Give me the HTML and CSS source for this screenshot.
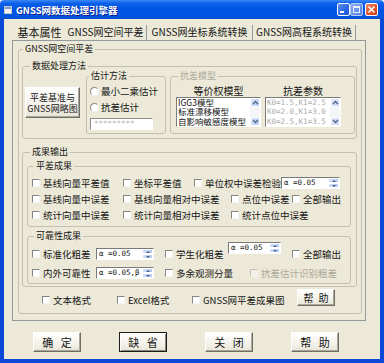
FILE: index.html
```html
<!DOCTYPE html>
<html lang="zh-CN">
<head>
<meta charset="utf-8">
<title>GNSS网数据处理引擎器</title>
<link rel="stylesheet" href="styles.css">
</head>
<body>
<div class="window">
  <div class="titlebar">
    <svg class="app-icon" width="8" height="8" viewBox="0 0 8 8">
      <rect x="0.5" y="0.5" width="7" height="7" fill="#f2f2f2" stroke="#c8c8c8"/>
      <rect x="1" y="1" width="6" height="2" fill="#7d9fd6"/>
    </svg>
    <span class="title">GNSS网数据处理引擎器</span>
    <div class="caption-btns">
      <span class="cap cap-min"><svg width="11" height="11" viewBox="0 0 11 11"><rect x="2" y="7" width="4" height="2" fill="#fff"/></svg></span>
      <span class="cap cap-max"><svg width="11" height="11" viewBox="0 0 11 11"><rect x="2.5" y="2.5" width="6" height="6" fill="none" stroke="#e8eefc"/><rect x="2.5" y="2.5" width="6" height="1.5" fill="#e8eefc"/></svg></span>
      <span class="cap cap-close"><svg width="11" height="11" viewBox="0 0 11 11"><path d="M2.5 2.5 L8.5 8.5 M8.5 2.5 L2.5 8.5" stroke="#fff" stroke-width="1.6"/></svg></span>
    </div>
  </div>

  <div class="client">
    <div class="tabs">
      <span class="tab tab-first">基本属性</span>
      <span class="tab tab-2">GNSS网空间平差</span>
      <span class="tab tab-3">GNSS网坐标系统转换</span>
      <span class="tab tab-4">GNSS网高程系统转换</span>
    </div>

    <div class="panel">
      <fieldset class="grp grp-main">
        <legend>GNSS网空间平差</legend>

        <fieldset class="grp grp-method">
          <legend>数据处理方法</legend>
          <div class="method-row">
            <button class="btn-raised datum" type="button">平差基准与<br>GNSS网略图</button>

            <fieldset class="grp grp-est">
              <legend>估计方法</legend>
              <label class="radio-row"><span class="radio"></span>最小二乘估计</label>
              <label class="radio-row"><span class="radio"></span>抗差估计</label>
              <div class="textbox">*********</div>
            </fieldset>

            <fieldset class="grp grp-robust">
              <legend>抗差模型</legend>
              <div class="robust-cols">
                <div class="rcol rcol-1">
                  <div class="rlabel">等价权模型</div>
                  <div class="listbox">
                    <div class="items">
                      <div>IGG3模型</div>
                      <div>标准漂移模型</div>
                      <div>自影响敏感度模型</div>
                    </div>
                    <div class="vscroll">
                      <span class="sb"><svg width="7" height="5" viewBox="0 0 7 5"><path d="M1 4 L3.5 1.5 L6 4" fill="none" stroke="#4d6185" stroke-width="1.3"/></svg></span>
                      <span class="track"></span>
                      <span class="sb"><svg width="7" height="5" viewBox="0 0 7 5"><path d="M1 1 L3.5 3.5 L6 1" fill="none" stroke="#4d6185" stroke-width="1.3"/></svg></span>
                    </div>
                  </div>
                </div>
                <div class="rcol rcol-2">
                  <div class="rlabel">抗差参数</div>
                  <div class="listbox listbox-off">
                    <div class="items mono">
                      <div>K0=1.5,K1=2.5</div>
                      <div>K0=2.0,K1=3.0</div>
                      <div>K0=2.5,K1=3.5</div>
                    </div>
                    <div class="vscroll">
                      <span class="sb"><svg width="7" height="5" viewBox="0 0 7 5"><path d="M1 4 L3.5 1.5 L6 4" fill="none" stroke="#4d6185" stroke-width="1.3"/></svg></span>
                      <span class="track"></span>
                      <span class="sb"><svg width="7" height="5" viewBox="0 0 7 5"><path d="M1 1 L3.5 3.5 L6 1" fill="none" stroke="#4d6185" stroke-width="1.3"/></svg></span>
                    </div>
                  </div>
                </div>
              </div>
            </fieldset>
          </div>
        </fieldset>

        <fieldset class="grp grp-out">
          <legend>成果输出</legend>

          <fieldset class="grp grp-adj">
            <legend>平差成果</legend>
            <div class="row">
              <label class="chk w91"><span class="box"></span>基线向量平差值</label>
              <label class="chk w71"><span class="box"></span>坐标平差值</label>
              <label class="chk w87"><span class="box"></span>单位权中误差检验</label>
              <span class="spin w59"><span class="spin-text">α =0.05</span><span class="spin-btns"><span class="sp sp-up"></span><span class="sp sp-down"></span></span></span>
            </div>
            <div class="row">
              <label class="chk w91"><span class="box"></span>基线向量中误差</label>
              <label class="chk w108"><span class="box"></span>基线向量相对中误差</label>
              <label class="chk w61"><span class="box"></span>点位中误差</label>
              <label class="chk"><span class="box"></span>全部输出</label>
            </div>
            <div class="row">
              <label class="chk w91"><span class="box"></span>统计向量中误差</label>
              <label class="chk w108"><span class="box"></span>统计向量相对中误差</label>
              <label class="chk"><span class="box"></span>统计点位中误差</label>
            </div>
          </fieldset>

          <fieldset class="grp grp-rel">
            <legend>可靠性成果</legend>
            <div class="row row-rel1">
              <label class="chk w64"><span class="box"></span>标准化粗差</label>
              <span class="spin w58"><span class="spin-text">α =0.05</span><span class="spin-btns"><span class="sp sp-up"></span><span class="sp sp-down"></span></span></span>
              <label class="chk w63 ml11"><span class="box"></span>学生化粗差</label>
              <span class="spin w53 spin-raised"><span class="spin-text">α =0.05</span><span class="spin-btns"><span class="sp sp-up"></span><span class="sp sp-down"></span></span></span>
              <label class="chk ml11"><span class="box"></span>全部输出</label>
            </div>
            <div class="row row-rel2">
              <label class="chk w64"><span class="box"></span>内外可靠性</label>
              <span class="spin w58"><span class="spin-text">α =0.05,β</span><span class="spin-btns"><span class="sp sp-up"></span><span class="sp sp-down"></span></span></span>
              <label class="chk w85 ml11"><span class="box"></span>多余观测分量</label>
              <label class="chk chk-off"><span class="box"></span>抗差估计识别粗差</label>
            </div>
          </fieldset>
        </fieldset>

        <div class="out-row">
          <label class="chk w75"><span class="box"></span>文本格式</label>
          <label class="chk w75"><span class="box"></span>Excel格式</label>
          <label class="chk w105"><span class="box"></span>GNSS网平差成果图</label>
          <button class="btn help-small" type="button">帮 助</button>
        </div>
      </fieldset>
    </div>

    <div class="actions">
      <button class="btn act" type="button">确 定</button>
      <button class="btn act btn-default" type="button">缺 省</button>
      <button class="btn act" type="button">关 闭</button>
      <button class="btn act" type="button">帮 助</button>
    </div>
  </div>
</div>
</body>
</html>
```

FILE: styles.css
```css
* { box-sizing: border-box; }

html, body {
  margin: 0;
  padding: 0;
}

body {
  width: 384px;
  height: 363px;
  overflow: hidden;
  background: #ffffff;
  font-family: "Noto Sans CJK SC", "Noto Sans", sans-serif;
  color: #161616;
}

.window {
  width: 384px;
  height: 363px;
  display: flex;
  flex-direction: column;
}

/* ---------- title bar ---------- */
.titlebar {
  height: 19px;
  flex: none;
  display: flex;
  align-items: center;
  padding: 0 6px 0 4px;
  border-radius: 4px 4px 0 0;
  background: linear-gradient(#3d8af5 0%, #0b5fe9 18%, #0054e3 50%, #0256e6 80%, #0c4ed0 100%);
}

.app-icon {
  flex: none;
  margin-top: 1px;
}

.title {
  margin-left: 4px;
  font-size: 9.5px;
  line-height: 12px;
  font-weight: bold;
  color: #ffffff;
  text-shadow: 1px 1px 0 #0a1f8a;
  white-space: nowrap;
}

.caption-btns {
  margin-left: auto;
  display: flex;
  align-items: center;
}

.cap {
  width: 13px;
  height: 13px;
  border: 1px solid #ffffff;
  border-radius: 2px;
  display: flex;
  align-items: center;
  justify-content: center;
}

.cap-min {
  background: linear-gradient(135deg, #5d93f7, #2a66e8 60%, #1f56d6);
}

.cap-max {
  border-color: #b6c9f4;
  background: linear-gradient(135deg, #8ab0f6, #6590ea 60%, #5a84e0);
}

.cap-close {
  margin-left: 2px;
  background: linear-gradient(135deg, #f08a68, #e0502a 60%, #c8401e);
}

/* ---------- client area ---------- */
.client {
  flex: 1;
  background: #ece9d8;
  border-style: solid;
  border-color: #0a48d8;
  border-width: 0 4px 4px 4px;
  padding: 2px 14px 0 8px;
  display: flex;
  flex-direction: column;
}

.tabs {
  height: 19px;
  margin-left: 2px;
  display: flex;
  align-items: flex-end;
}

.tab {
  height: 15px;
  line-height: 14px;
  font-size: 10px;
  text-align: center;
  white-space: nowrap;
  border-right: 1px solid #919b9c;
  flex: none;
}

.tab-first {
  width: 51px;
  font-size: 11px;
  border-right: none;
}

.tab-2 { width: 82px; }
.tab-3 { width: 106px; }
.tab-4 { width: 103px; }

.panel {
  width: 354px;
  flex: none;
  border: 1px solid #919b9c;
  padding: 3px 0 6px 5px;
}

/* ---------- group boxes ---------- */
.grp {
  margin: 0;
  min-inline-size: 0;
  border: 1px solid #c3c0b1;
  border-radius: 3px;
}

.grp legend {
  font-size: 9px;
  line-height: 10px;
  padding: 0 2px;
  color: #161616;
  white-space: nowrap;
}

.grp-main {
  width: 344px;
  padding: 7px 4px 7px 3px;
}
.grp-main > legend { margin-left: 1px; }

.grp-method {
  width: 335px;
  padding: 0 2px 4px 2px;
}
.grp-method > legend { margin-left: 5px; }

.method-row {
  display: flex;
  align-items: flex-start;
}

.grp-est {
  width: 80px;
  margin-left: 6px;
  padding: 2px 3px 3px 3px;
  flex: none;
}
.grp-est > legend { margin-left: -1px; }

.grp-robust {
  width: 185px;
  margin-left: 4px;
  padding: 4px 5px 6px 5px;
  flex: none;
}
.grp-robust > legend {
  margin-left: 2px;
  color: #aca899;
}

.grp-out {
  width: 335px;
  margin-top: 8px;
  padding: 4px 4px 2px 4px;
}
.grp-out > legend { margin-left: 3px; }

.grp-adj {
  width: 324px;
  padding: 4px 0 3px 4px;
}
.grp-adj > legend { margin-left: 2px; }

.grp-rel {
  width: 324px;
  margin-top: 4px;
  padding: 3px 0 1px 4px;
}
.grp-rel > legend { margin-left: 2px; }

/* ---------- buttons ---------- */
.btn-raised,
.btn {
  font-family: "Noto Sans CJK SC", "Noto Sans", sans-serif;
  color: #161616;
  padding: 0;
  margin: 0;
  border: 1px solid;
  border-color: #ffffff #6f6d64 #6f6d64 #ffffff;
  box-shadow: inset -1px -1px 0 #aca899;
  background: linear-gradient(#fefefd, #f1efe6 70%, #e6e3d6);
  flex: none;
}

.datum {
  width: 55px;
  height: 31px;
  margin-top: 16px;
  font-size: 9px;
  line-height: 11px;
  white-space: nowrap;
}

.help-small {
  width: 38px;
  height: 17px;
  margin-left: 0;
  font-size: 10px;
  line-height: 14px;
  word-spacing: 3px;
}

.actions {
  display: flex;
  gap: 38px;
  margin-top: 11px;
  padding-left: 21px;
}

.act {
  width: 48px;
  height: 20px;
  font-size: 11px;
  line-height: 17px;
  word-spacing: 5px;
}

.btn-default {
  border: 1px solid #1b1b1b;
  box-shadow: inset 1px 1px 0 #ffffff, inset -1px -1px 0 #8a887c;
}

/* ---------- radios & text box ---------- */
.radio-row {
  display: flex;
  align-items: center;
  height: 16px;
  font-size: 9.5px;
  line-height: 12px;
  white-space: nowrap;
}

.radio {
  width: 9px;
  height: 9px;
  margin-right: 2px;
  border-radius: 50%;
  border: 1px solid;
  border-color: #8c8c8c #f4f4f4 #f4f4f4 #8c8c8c;
  background: #ffffff;
  flex: none;
}

.textbox {
  width: 63px;
  height: 12px;
  margin-top: 3px;
  border: 1px solid;
  border-color: #8c8c8c #ffffff #ffffff #8c8c8c;
  background: #ffffff;
  color: #b4b4b4;
  font-family: "DejaVu Sans Mono", monospace;
  font-size: 7.5px;
  line-height: 10px;
  padding-left: 3px;
  overflow: hidden;
}

/* ---------- robust model lists ---------- */
.robust-cols {
  display: flex;
  gap: 4px;
}

.rcol-1 { width: 85px; }
.rcol-2 { width: 76px; }

.rlabel {
  height: 12px;
  line-height: 12px;
  font-size: 10px;
  text-align: center;
  white-space: nowrap;
}

.listbox {
  height: 30px;
  display: flex;
  border: 1px solid;
  border-color: #7a7a7a #ffffff #ffffff #7a7a7a;
  background: #ffffff;
}

.items {
  flex: 1;
  overflow: hidden;
  padding: 0 0 0 1px;
  font-size: 8.5px;
  line-height: 9.3px;
  white-space: nowrap;
  color: #101010;
}

.items.mono {
  font-family: "DejaVu Sans Mono", monospace;
  font-size: 7.5px;
  color: #a9a9a9;
}

.vscroll {
  width: 10px;
  flex: none;
  display: flex;
  flex-direction: column;
  background: #f3f3ef;
}

.sb {
  height: 9px;
  flex: none;
  display: flex;
  align-items: center;
  justify-content: center;
  border: 1px solid #ffffff;
  border-radius: 2px;
  background: linear-gradient(135deg, #dbe6fd, #b7cbf5);
}

.track {
  flex: 1;
  background: #f4f5f8;
}

.listbox-off .sb {
  background: linear-gradient(135deg, #e4ebfb, #c9d6f3);
}

/* ---------- checkboxes ---------- */
.row {
  display: flex;
  align-items: center;
  height: 16px;
}

.row-rel1 { height: 20px; }
.row-rel2 { height: 18px; }

.chk {
  display: flex;
  align-items: center;
  flex: none;
  font-size: 9.5px;
  line-height: 12px;
  white-space: nowrap;
}

.box {
  width: 8px;
  height: 8px;
  margin-right: 3px;
  flex: none;
  background: #ffffff;
  border-top: 1px solid #858585;
  border-left: 1px solid #858585;
  border-right: 1px solid #f4f4f0;
  border-bottom: 1px solid #f4f4f0;
}

.chk-off {
  color: #aca899;
}
.chk-off .box {
  background: #f1efe6;
  border-top-color: #c2bfb2;
  border-left-color: #c2bfb2;
}

.w53 { width: 53px; }
.w58 { width: 58px; }
.w59 { width: 59px; }
.w61 { width: 61px; }
.w63 { width: 63px; }
.w64 { width: 64px; }
.w71 { width: 71px; }
.w75 { width: 75px; }
.w85 { width: 85px; }
.w87 { width: 87px; }
.w91 { width: 91px; }
.w105 { width: 105px; }
.w108 { width: 108px; }
.ml11 { margin-left: 11px; }

/* ---------- spin boxes ---------- */
.spin {
  height: 12px;
  flex: none;
  display: flex;
  border: 1px solid;
  border-color: #7a7a7a #ffffff #ffffff #7a7a7a;
  background: #ffffff;
}

.spin-raised {
  align-self: flex-start;
  margin-top: -2px;
}

.spin-text {
  flex: 1;
  overflow: hidden;
  white-space: nowrap;
  padding-left: 2px;
  font-family: "DejaVu Sans Mono", monospace;
  font-size: 7.5px;
  line-height: 10px;
  color: #161616;
}

.spin-btns {
  width: 11px;
  flex: none;
  display: flex;
  flex-direction: column;
}

.sp {
  flex: 1;
  display: flex;
  align-items: center;
  justify-content: center;
  background: linear-gradient(135deg, #d6e2fc, #b2c6f2);
  border: 0.5px solid #ffffff;
}

.sp::after {
  content: "";
  width: 0;
  height: 0;
  border-left: 2px solid transparent;
  border-right: 2px solid transparent;
}

.sp-up::after { border-bottom: 2px solid #4d6185; }
.sp-down::after { border-top: 2px solid #4d6185; }

/* ---------- bottom output row ---------- */
.out-row {
  height: 19px;
  display: flex;
  align-items: flex-end;
  padding-left: 20px;
}

.out-row .chk {
  height: 12px;
}
```
